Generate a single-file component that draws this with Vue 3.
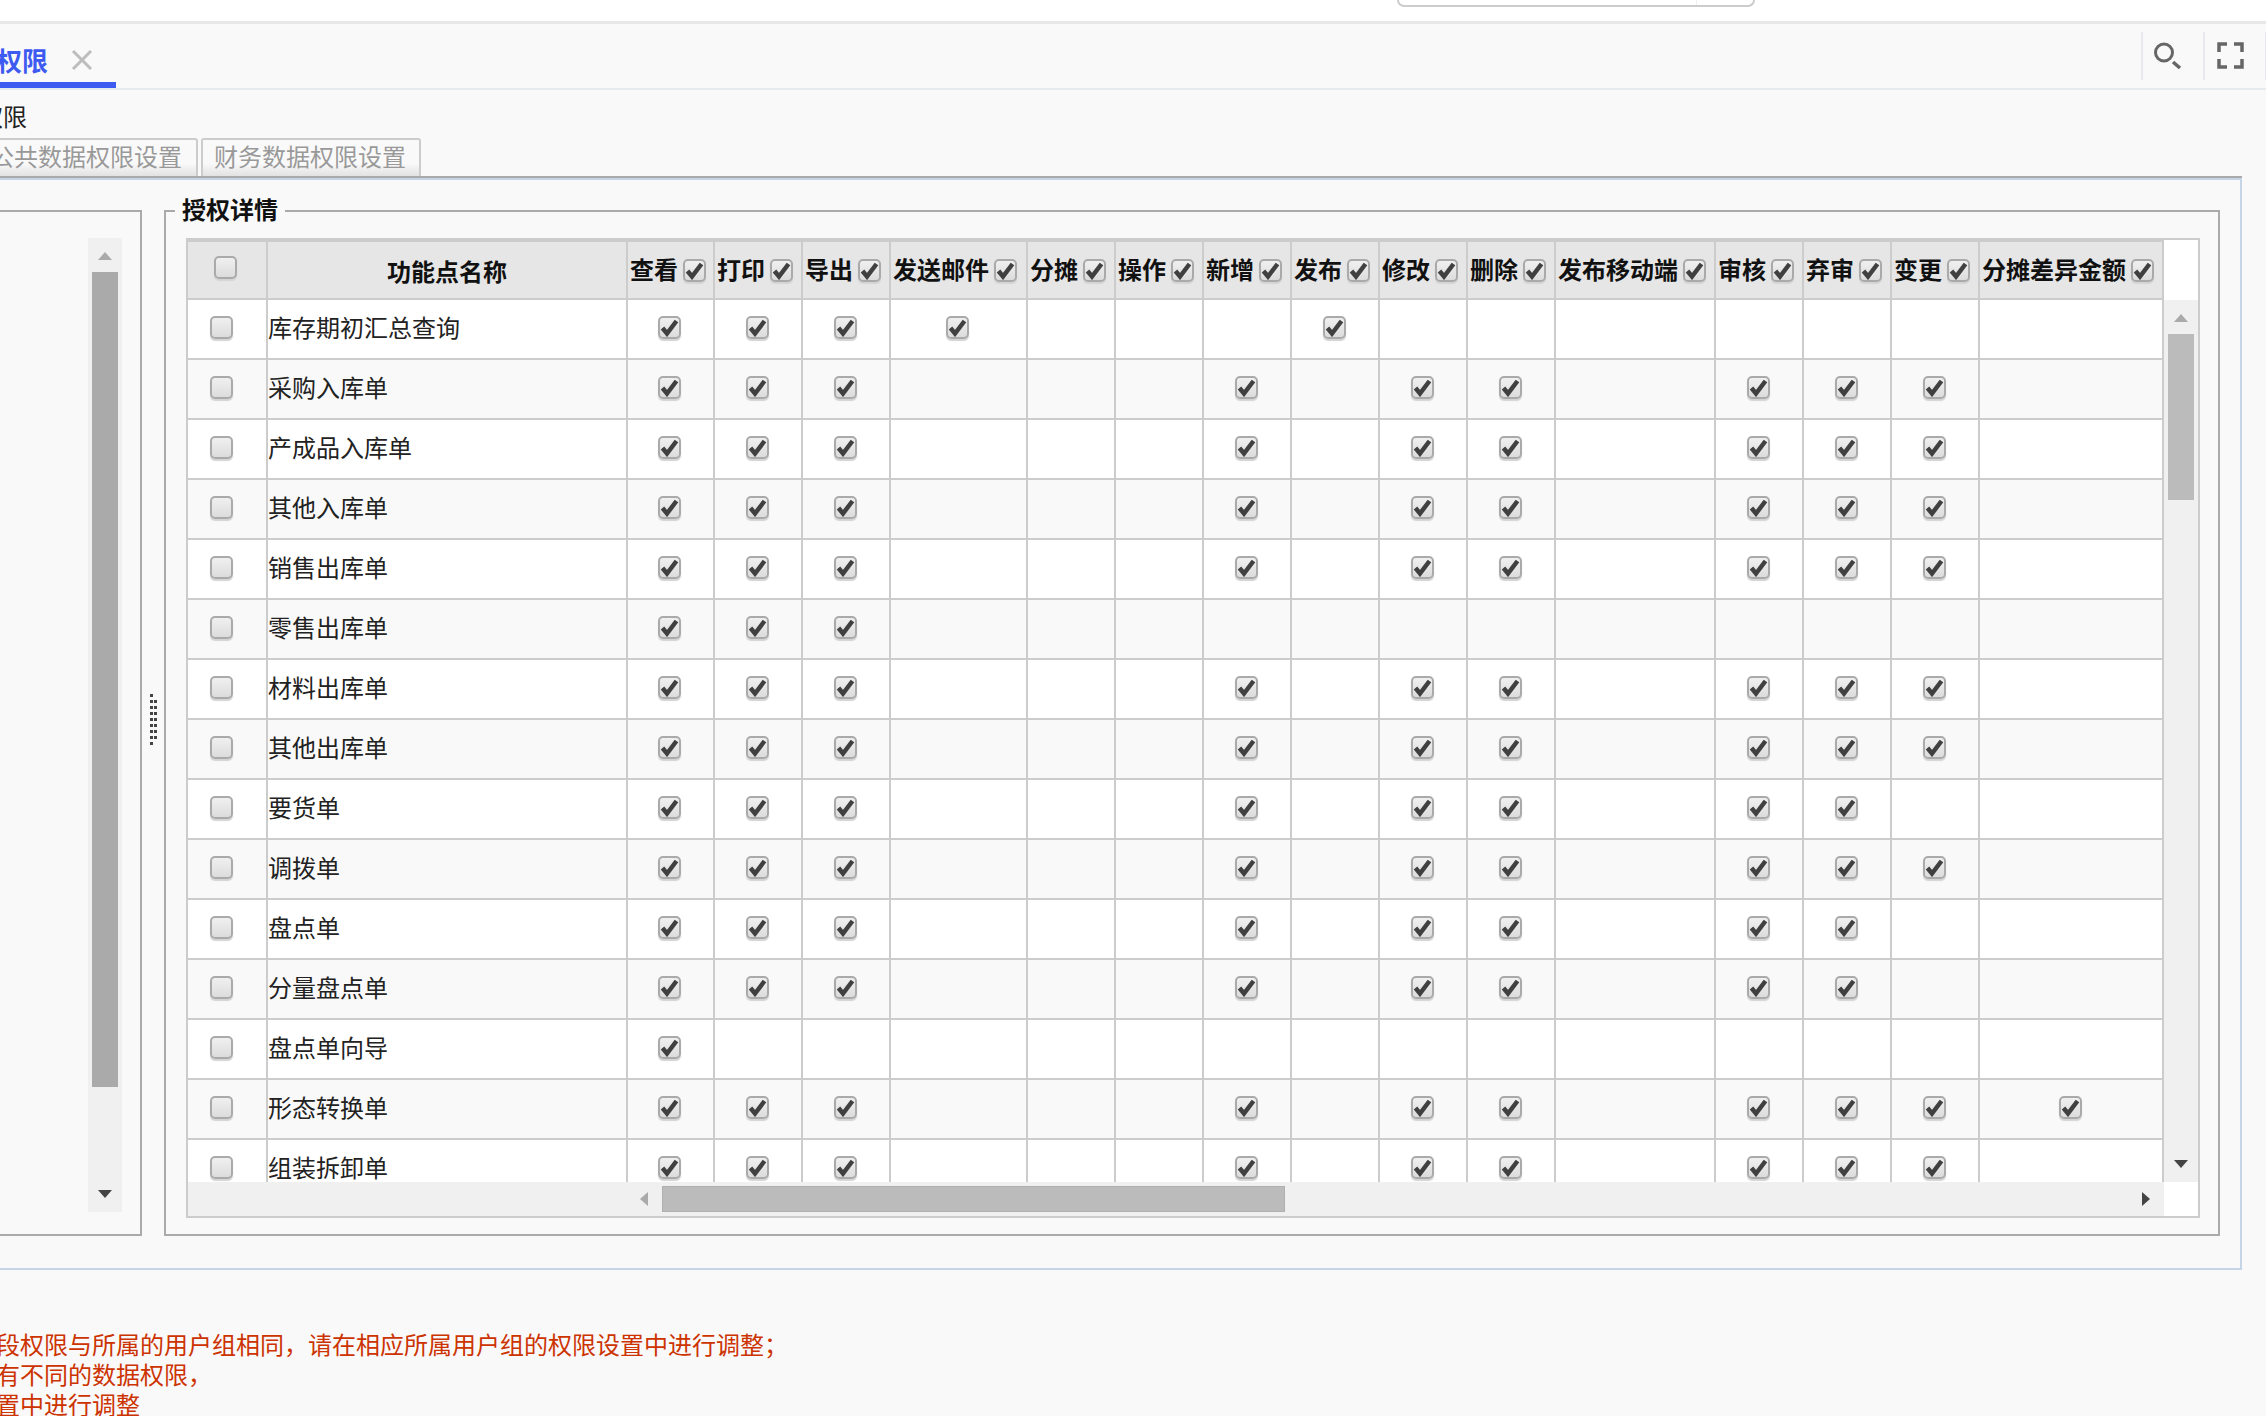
<script setup>
const headers = ['查看', '打印', '导出', '发送邮件', '分摊', '操作', '新增', '发布', '修改', '删除', '发布移动端', '审核', '弃审', '变更', '分摊差异金额']
const full = [0, 1, 2, 6, 8, 9, 11, 12, 13]
const noChange = [0, 1, 2, 6, 8, 9, 11, 12]
const rows = [
  { name: '库存期初汇总查询', on: [0, 1, 2, 3, 7] },
  { name: '采购入库单', on: full },
  { name: '产成品入库单', on: full },
  { name: '其他入库单', on: full },
  { name: '销售出库单', on: full },
  { name: '零售出库单', on: [0, 1, 2] },
  { name: '材料出库单', on: full },
  { name: '其他出库单', on: full },
  { name: '要货单', on: noChange },
  { name: '调拨单', on: full },
  { name: '盘点单', on: noChange },
  { name: '分量盘点单', on: noChange },
  { name: '盘点单向导', on: [0] },
  { name: '形态转换单', on: [...full, 14] },
  { name: '组装拆卸单', on: full }
]
const dots = []
for (let i = 0; i < 9; i++) {
  dots.push({ x: 0, y: i * 6 })
  if (i > 0 && i < 8) dots.push({ x: 4, y: i * 6 })
}
</script>

<template>
  <div class="page">
    <div class="topbar"><div class="searchbox"><span class="searchbox-end"></span></div></div>

    <div class="tabbar">
      <div class="tab">
        <span class="tab-text">权限</span>
        <svg class="tab-close" width="22" height="20" viewBox="0 0 22 20"><path d="M2 1 20 19M20 1 2 19" fill="none" stroke="#bdbdbd" stroke-width="3" /></svg>
      </div>
      <div class="tools">
        <div class="tool">
          <svg width="30" height="27" viewBox="0 0 30 27"><circle cx="11" cy="10.500" r="8.500" fill="none" stroke="#666" stroke-width="3" /><path d="M20 20 27 26" fill="none" stroke="#666" stroke-width="3.500" /></svg>
        </div>
        <div class="tool">
          <svg width="27" height="27" viewBox="0 0 27 27"><path d="M10 2H2V10M17 2H25V10M2 17V25H10M25 17V25H17" fill="none" stroke="#666" stroke-width="3.500" /></svg>
        </div>
        <div class="tool tool-end"></div>
      </div>
    </div>

    <div class="title">权限</div>

    <div class="subtabs">
      <div class="subtab first">公共数据权限设置</div>
      <div class="subtab">财务数据权限设置</div>
    </div>

    <div class="panel">
      <div class="left-box">
        <div class="vbar left-vbar">
          <i class="arrow up light"></i>
          <div class="thumb left-thumb"></div>
          <i class="arrow down"></i>
        </div>
      </div>

      <div class="splitter">
        <svg width="7" height="51" viewBox="0 0 7 51"><rect v-for="(d, i) in dots" :key="i" :x="d.x" :y="d.y" width="3" height="3" fill="#444" /></svg>
      </div>

      <fieldset class="detail">
        <legend>授权详情</legend>
        <div class="frame">
          <div class="cols head">
            <div class="hcell hcheck"><span class="cb"></span></div>
            <div class="hcell hname">功能点名称</div>
            <div v-for="h in headers" :key="h" class="hcell">
              <span class="hlabel">{{ h }}</span>
              <span class="cb">
                <svg width="19" height="19" viewBox="0 0 19 19"><path d="M2.500 10 7 15.500 16.500 3" fill="none" stroke="#404040" stroke-width="4.500" /></svg>
              </span>
            </div>
          </div>
          <div class="head-corner"></div>

          <div class="body">
            <div v-for="(r, i) in rows" :key="r.name" class="cols row" :class="{ odd: i % 2 }">
              <div class="cell check-cell"><span class="cb"></span></div>
              <div class="cell name-cell">{{ r.name }}</div>
              <div v-for="(h, c) in headers" :key="h" class="cell">
                <span v-if="r.on.includes(c)" class="cb">
                  <svg width="19" height="19" viewBox="0 0 19 19"><path d="M2.500 10 7 15.500 16.500 3" fill="none" stroke="#404040" stroke-width="4.500" /></svg>
                </span>
              </div>
            </div>
          </div>

          <div class="vbar right-vbar">
            <i class="arrow up light"></i>
            <div class="thumb right-thumb"></div>
            <i class="arrow down"></i>
          </div>

          <div class="hbar">
            <i class="arrow left light"></i>
            <div class="hthumb"></div>
            <i class="arrow right"></i>
          </div>
          <div class="foot-corner"></div>
        </div>
      </fieldset>
    </div>

    <div class="notes">
      <div>段权限与所属的用户组相同，请在相应所属用户组的权限设置中进行调整；</div>
      <div>有不同的数据权限，</div>
      <div>置中进行调整</div>
    </div>
  </div>
</template>

<style>
html, body { margin: 0; background: #f9f9f9; }
</style>

<style scoped>
.page {
  width: 2266px;
  height: 1416px;
  overflow: hidden;
  background: #f9f9f9;
  color: #222;
  font-family: "Noto Sans CJK SC", "Liberation Sans", sans-serif;
  font-size: 24px;
}
.topbar {
  height: 21px;
  background: #fff;
  border-bottom: 3px solid #e8e8e8;
  box-sizing: content-box;
}
.searchbox {
  width: 354px;
  height: 5px;
  margin-left: 1397px;
  border: 2px solid #ccc;
  border-top: 0;
  border-radius: 0 0 8px 8px;
  display: flex;
  justify-content: flex-end;
}
.searchbox-end { width: 56px; border-left: 1px solid #f0f0f0; }

.tabbar {
  height: 64px;
  border-bottom: 2px solid #e6ebf0;
  display: flex;
}
.tab {
  width: 120px;
  height: 64px;
  box-sizing: border-box;
  margin-left: -4px;
  padding-top: 14px;
  border-bottom: 6px solid #3d5af1;
  display: flex;
  align-items: center;
  gap: 23px;
}
.tab-text { font-size: 26px; font-weight: 700; color: #3d5af1; line-height: 32px; white-space: nowrap; }
.tab-close { flex: none; }
.tools { margin-left: auto; display: flex; padding-top: 8px; }
.tool {
  width: 60px;
  height: 48px;
  box-sizing: content-box;
  border-left: 2px solid #e8e8ee;
  display: flex;
  align-items: center;
  justify-content: center;
}
.tool svg { margin: 0 10px 2px 0; }
.tool-end { width: 0; border-left-width: 1px; }
.title { margin: 10px 0 0 -21px; height: 34px; line-height: 32px; }

.subtabs {
  height: 38px;
  margin: 4px 24px 0 -24px;
  border-bottom: 2px solid #aaa;
  display: flex;
  gap: 3px;
}
.subtab {
  height: 38px;
  box-sizing: border-box;
  padding: 0 13px 0 11px;
  border: 2px solid #ccc;
  border-bottom: 0;
  border-radius: 3px 3px 0 0;
  background: linear-gradient(#f9f9f9 65%, #e2e2e2);
  color: #999;
  line-height: 32px;
  white-space: nowrap;
}
.subtab.first { border-left: 0; padding: 0 14px; }

.panel {
  height: 1092px;
  box-sizing: border-box;
  margin: 0 24px 0 -20px;
  padding: 18px 0 32px;
  border: 2px solid #c5d5e5;
  display: flex;
}
.left-box {
  width: 160px;
  box-sizing: border-box;
  margin-top: 12px;
  padding: 26px 18px 22px 0;
  border: 2px solid #aaa;
  border-left: 0;
  display: flex;
  justify-content: flex-end;
}
.splitter {
  width: 22px;
  box-sizing: border-box;
  padding-top: 4px;
  display: flex;
  align-items: center;
  justify-content: center;
}
.detail {
  width: 2056px;
  box-sizing: border-box;
  margin: 0;
  min-width: 0;
  padding: 14px 18px 16px 20px;
  border: 2px solid #aaa;
}
legend {
  height: 26px;
  line-height: 22px;
  margin-left: -11px;
  padding: 0 7px;
  font-weight: 700;
  color: #111;
}
.frame {
  width: 2014px;
  height: 980px;
  box-sizing: border-box;
  border: 2px solid #ccc;
  display: grid;
  grid-template-columns: 1976px 34px;
  grid-template-rows: 60px 882px 34px;
}
.cols {
  display: grid;
  grid-template-columns: 80px 360px 87px 88px 88px 137px 88px 88px 88px 88px 88px 88px 160px 88px 88px 88px 184px;
}
.head { background: #e6e6e6; border-top: 2px solid #ccc; }
.head-corner { background: #fff; }
.hcell {
  box-sizing: border-box;
  height: 58px;
  padding-left: 2px;
  border-right: 2px solid #ccc;
  border-bottom: 2px solid #ccc;
  display: flex;
  align-items: center;
  gap: 5px;
  font-weight: 700;
  color: #111;
  white-space: nowrap;
}
.hlabel { padding-bottom: 3px; }
.hcheck { justify-content: center; padding: 0 3px 5px 0; }
.hname { justify-content: center; padding: 0; }
.body { overflow: hidden; height: 882px; background: #fff; }
.row { background: #fff; }
.row.odd { background: #f9f9f9; }
.cell {
  box-sizing: border-box;
  height: 60px;
  padding: 0 2px 3px 0;
  border-right: 2px solid #ccc;
  border-bottom: 2px solid #ccc;
  display: flex;
  align-items: center;
  justify-content: center;
}
.check-cell { padding-right: 11px; }
.name-cell { justify-content: flex-start; white-space: nowrap; padding-bottom: 6px; }
.cb {
  flex: none;
  width: 23px;
  height: 23px;
  box-sizing: border-box;
  border: 2px solid #aaa;
  border-radius: 5px;
  background: linear-gradient(#f0f0f0, #dcdcdc);
  box-shadow: 0 2px 1px #d4d4d4;
  display: inline-flex;
  align-items: center;
  justify-content: center;
}
.vbar {
  width: 34px;
  box-sizing: border-box;
  background: #f0f0f0;
  display: flex;
  flex-direction: column;
  align-items: center;
}
.left-vbar { padding: 14px 0; height: 974px; }
.right-vbar { padding: 14px 0; height: 882px; }
.thumb { width: 26px; margin-top: 12px; }
.left-thumb { height: 815px; background: #aaa; }
.right-thumb { height: 166px; background: #bbb; }
.vbar .down { margin-top: auto; }
.arrow { display: block; width: 0; height: 0; flex: none; border-style: solid; border-color: transparent; }
.arrow.up { border-width: 0 7px 8px; border-bottom-color: #444; }
.arrow.down { border-width: 8px 7px 0; border-top-color: #444; }
.arrow.left { border-width: 7px 8px 7px 0; border-right-color: #444; }
.arrow.right { border-width: 7px 0 7px 8px; border-left-color: #444; }
.arrow.up.light { border-bottom-color: #aaa; }
.arrow.left.light { border-right-color: #aaa; }
.hbar {
  height: 34px;
  box-sizing: border-box;
  background: #f0f0f0;
  display: flex;
  align-items: center;
  padding: 0 14px 0 452px;
}
.hthumb {
  width: 623px;
  height: 26px;
  box-sizing: border-box;
  margin-left: 14px;
  background: #bbb;
  border: 1px solid #b0b0b0;
}
.hbar .right { margin-left: auto; }
.foot-corner { background: #fff; }

.notes { margin: 59px 0 0 -4px; color: #cc3300; line-height: 30px; white-space: nowrap; }
</style>
